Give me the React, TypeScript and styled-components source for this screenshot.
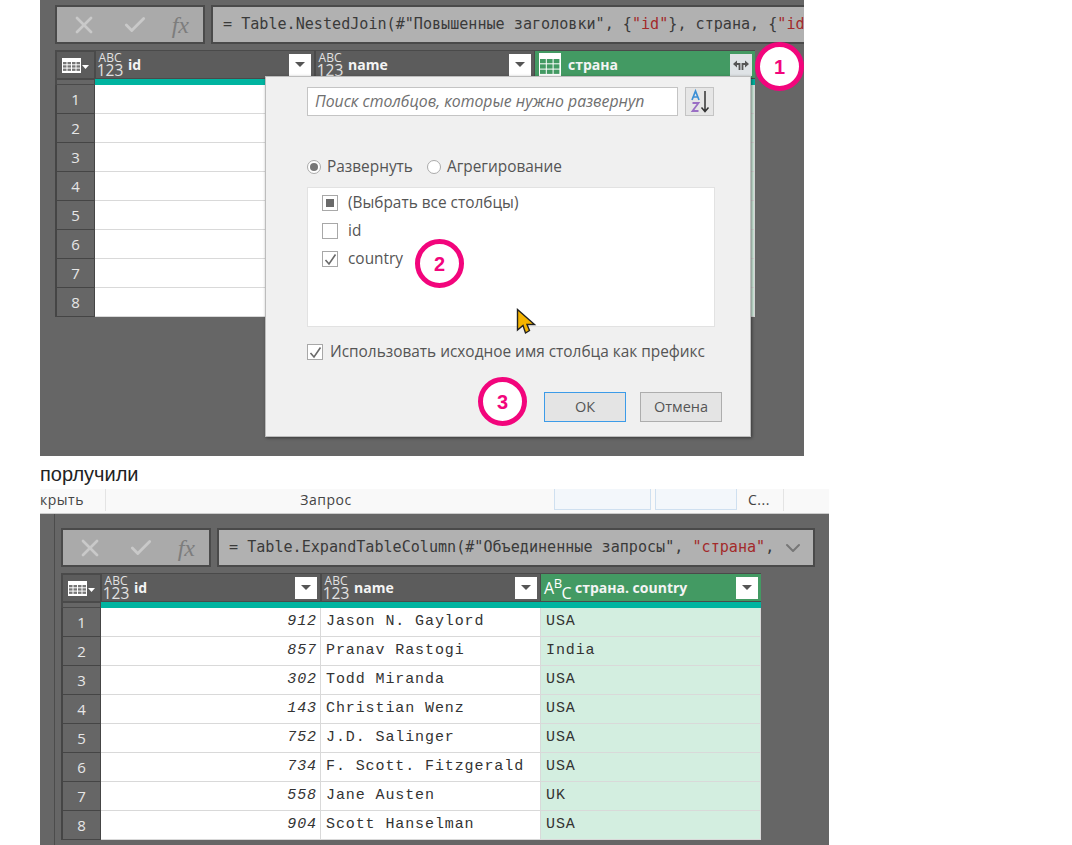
import React from 'react';
import styled, { createGlobalStyle } from 'styled-components';
import { X, Check, ChevronDown } from 'lucide-react';

const GlobalStyle = createGlobalStyle`
    html, body {
        margin: 0;
        padding: 0;
        background: #fff;
    }
    * {
        box-sizing: border-box;
    }
`;

const uiFont = `'Open Sans', 'Noto Sans', sans-serif`;

const Page = styled.div`
    width: 1072px;
    height: 845px;
    overflow: hidden;
    display: flex;
    flex-direction: column;
    align-items: flex-start;
`;

const TopShot = styled.section`
    position: relative;
    width: 764px;
    height: 456px;
    margin-left: 40px;
    padding: 5px 0 0 15px;
    background: #666;
    overflow: hidden;
`;

const Caption = styled.p`
    margin: 0 0 0 40px;
    height: 33px;
    padding-top: 5px;
    font: 20px/26px 'Liberation Sans', Arial, sans-serif;
    color: #222;
`;

const BottomShot = styled.section`
    width: 789px;
    height: 356px;
    margin-left: 40px;
    background: #666;
    overflow: hidden;
`;

const Ribbon = styled.div`
    height: 25px;
    display: flex;
    background: #f9f9f9;
    border-bottom: 1px solid #ccc;
    font: 14px/22px ${uiFont};
    color: #444;
`;

const RibbonCell = styled.div<{ $width: number; $center?: boolean; $sep?: boolean }>`
    width: ${(p) => p.$width}px;
    height: 22px;
    padding-right: ${(p) => (p.$center ? 8 : 0)}px;
    letter-spacing: 0.5px;
    text-align: ${(p) => (p.$center ? 'center' : 'left')};
    border-right: ${(p) => (p.$sep ? '1px solid #e4e4e4' : '0')};
    overflow: hidden;
`;

const RibbonSlot = styled.div<{ $width: number }>`
    width: ${(p) => p.$width}px;
    height: 21px;
    margin-right: 4px;
    background: #f3f7fb;
    border: 1px solid #cfe0f0;
    border-top: 0;
`;

const BottomBody = styled.div`
    margin-left: 14px;
    padding: 14px 0 0 6px;
    height: 331px;
    border-left: 1px solid #4c4c4c;
`;

const FormulaRow = styled.div`
    display: flex;
    gap: 6px;
    height: 39px;
`;

const ToolBox = styled.div`
    width: 150px;
    flex: none;
    display: flex;
    align-items: center;
    justify-content: space-between;
    padding: 0 14px 0 13px;
    background: #aaa;
    border: 2px solid #4a4a4a;
    color: #c9c9c9;
`;

const FxLabel = styled.span`
    font: italic 24px/1 'Liberation Serif', serif;
    color: #7d7d7d;
`;

const FormulaBox = styled.div<{ $width: number }>`
    width: ${(p) => p.$width}px;
    flex: none;
    display: flex;
    align-items: center;
    justify-content: space-between;
    padding: 0 8px 0 10px;
    background: #b1b1b1;
    border: 2px solid #4a4a4a;
    font: 15.1px/1 'DejaVu Sans Mono', monospace;
    color: #3a3a3a;
    white-space: pre;
    overflow: hidden;
`;

const Str = styled.span`
    color: #a32a2a;
`;

const Table = styled.div`
    margin-top: 6px;
    display: grid;
    width: 700px;
    grid-template-columns: 40px repeat(3, 220px);
    background: #555;
`;

const HeadCell = styled.div<{ $green?: boolean }>`
    height: 29px;
    display: flex;
    align-items: center;
    padding: 0 3px 0 2px;
    border: 1px solid #4a4a4a;
    border-left-width: ${(p) => (p.$green ? 0 : 1)}px;
    border-right-width: ${(p) => (p.$green ? 0 : 1)}px;
    background: ${(p) => (p.$green ? '#439a63' : '#5c5c5c')};
    color: #fff;
    font: 700 14px/1 ${uiFont};
`;

const CornerCell = styled(HeadCell)`
    justify-content: center;
    gap: 1px;
    padding: 0;
    border-width: 2px 1px 1px 2px;
`;

const HeadTitle = styled.span`
    flex: 1;
    margin-left: 6px;
    color: #f4f4f4;
`;

const TypeIcon = styled.span`
    width: 24px;
    display: flex;
    flex-direction: column;
    align-items: center;
    color: #e2e2e2;
    font: 400 12px/10px ${uiFont};
    & > b {
        font: 400 15.5px/14px ${uiFont};
    }
`;

const TextTypeIcon = styled.span`
    width: 26px;
    margin: 0 -1px 0 1px;
    color: #fff;
    font: 400 16px/1 ${uiFont};
    white-space: nowrap;
    letter-spacing: -0.5px;
    & > sup {
        font-size: 13px;
        position: relative;
        top: -6px;
        vertical-align: baseline;
    }
    & > sub {
        font-size: 16px;
        position: relative;
        top: 5px;
        vertical-align: baseline;
    }
`;

const FilterButton = styled.button<{ $expand?: boolean }>`
    width: 22px;
    height: 22px;
    padding: 0;
    display: flex;
    align-items: center;
    justify-content: center;
    background: ${(p) => (p.$expand ? '#dfe3e6' : '#fff')};
    border: 0;
`;

const TableIconBox = styled.span`
    width: 22px;
    height: 23px;
    margin: 0 1px 0 2px;
    display: flex;
    align-items: center;
    justify-content: center;
    background: #fff;
`;

const TealCell = styled.div<{ $dark?: boolean }>`
    height: 6px;
    background: ${(p) => (p.$dark ? '#666' : '#00b4a0')};
    border: ${(p) => (p.$dark ? '1px solid #4a4a4a' : '0')};
    border-width: ${(p) => (p.$dark ? '1px 1px 1px 2px' : '0 1px 0 0')};
    border-color: ${(p) => (p.$dark ? '#4a4a4a' : '#ddd')};
`;

const RowNumber = styled.div`
    height: 29px;
    display: flex;
    align-items: center;
    justify-content: center;
    background: #666;
    border: 1px solid #454545;
    border-left-width: 2px;
    border-top: 0;
    color: #e6e6e6;
    font: 15px/1 ${uiFont};
`;

const DataCell = styled.div<{ $right?: boolean; $tint?: boolean }>`
    height: 29px;
    padding: 0 3px 0 5px;
    text-align: ${(p) => (p.$right ? 'right' : 'left')};
    background: ${(p) => (p.$tint ? '#d3eee0' : '#fff')};
    border-right: 1px solid #d9d9d9;
    border-bottom: 1px solid #d9d9d9;
    font: ${(p) => (p.$right ? 'italic ' : '')}15px/27px 'Liberation Mono', 'Courier New', monospace;
    letter-spacing: 0.9px;
    color: #333;
    white-space: nowrap;
`;

const Dialog = styled.div`
    position: absolute;
    left: 225px;
    top: 76px;
    width: 486px;
    height: 361px;
    padding: 10px 28px 0 41px;
    background: #f0f0f0;
    border: 1px solid #bcbcbc;
    box-shadow: 1px 1px 3px rgba(0, 0, 0, 0.45);
    font: 15.4px/1 ${uiFont};
    color: #555;
`;

const SearchRow = styled.div`
    display: flex;
    gap: 7px;
`;

const SearchField = styled.div`
    width: 371px;
    height: 29px;
    padding: 0 7px;
    background: #fff;
    border: 1px solid #c4c4c4;
    font: italic 15.8px/27px ${uiFont};
    color: #6f6f6f;
    white-space: nowrap;
    overflow: hidden;
`;

const SortButton = styled.div`
    width: 29px;
    height: 29px;
    background: #e6e6e6;
    border: 1px solid #c4c4c4;
`;

const RadioRow = styled.div`
    margin-top: 40px;
    height: 22px;
    display: flex;
    align-items: center;
`;

const RadioItem = styled.label`
    display: flex;
    align-items: center;
    gap: 6px;
    margin-right: 14px;
`;

const RadioMark = styled.span<{ $on?: boolean }>`
    width: 14px;
    height: 14px;
    border-radius: 50%;
    border: 1px solid #aaa;
    background: #fff;
    position: relative;
    &::after {
        content: '';
        display: ${(p) => (p.$on ? 'block' : 'none')};
        position: absolute;
        inset: 2px;
        border-radius: 50%;
        background: #777;
    }
`;

const ColumnList = styled.div`
    margin-top: 9px;
    width: 408px;
    height: 140px;
    padding: 1px 14px 0;
    background: #fff;
    border: 1px solid #e2e2e2;
`;

const ListRow = styled.div`
    height: 28px;
    display: flex;
    align-items: center;
    gap: 10px;
`;

const CheckMark = styled.span<{ $mixed?: boolean }>`
    width: 16px;
    height: 16px;
    flex: none;
    display: flex;
    align-items: center;
    justify-content: center;
    background: #fff;
    border: 1px solid #a8a8a8;
    color: #666;
    &::after {
        content: '';
        display: ${(p) => (p.$mixed ? 'block' : 'none')};
        width: 8px;
        height: 8px;
        background: #6a6a6a;
    }
`;

const PrefixRow = styled.div`
    margin-top: 11px;
    height: 28px;
    display: flex;
    align-items: center;
    gap: 7px;
    white-space: nowrap;
`;

const ButtonRow = styled.div`
    margin-top: 26px;
    display: flex;
    justify-content: flex-end;
    gap: 14px;
`;

const DialogButton = styled.button<{ $primary?: boolean }>`
    width: 82px;
    height: 30px;
    padding: 0;
    background: #e4e4e4;
    border: ${(p) => (p.$primary ? '1px solid #3c9be8' : '1px solid #adadad')};
    font: 14.5px/1 ${uiFont};
    color: #555;
`;

const Callout = styled.span<{ $x: number; $y: number }>`
    position: absolute;
    left: ${(p) => p.$x}px;
    top: ${(p) => p.$y}px;
    width: 49px;
    height: 49px;
    display: flex;
    align-items: center;
    justify-content: center;
    background: #fff;
    border: 5px solid #f2057c;
    border-radius: 50%;
    color: #f2057c;
    font: 700 20px/1 'Liberation Sans', sans-serif;
`;

const CursorMark = styled.svg`
    position: absolute;
    left: 476px;
    top: 308px;
`;

function GridCells({ color, cols, rows, x, y, w, h }: {
    color: string;
    cols: number;
    rows: number;
    x: number;
    y: number;
    w: number;
    h: number;
}): React.ReactElement {
    const cells: React.ReactElement[] = [];
    for (let r = 0; r < rows; r += 1) {
        for (let c = 0; c < cols; c += 1) {
            cells.push(<rect key={`${r}-${c}`} x={x + c * (w + 1)} y={y + r * (h + 1)} width={w} height={h} fill={color} />);
        }
    }
    return <>{cells}</>;
}

function CornerIcon(): React.ReactElement {
    return (
        <svg width="19" height="15" viewBox="0 0 19 15">
            <rect width="19" height="15" fill="#fff" />
            <GridCells color="#777" cols={4} rows={3} x={1} y={4} w={3.5} h={2.3} />
        </svg>
    );
}

function GreenTableIcon(): React.ReactElement {
    return (
        <svg width="20" height="20" viewBox="0 0 20 20">
            <GridCells color="#439a63" cols={3} rows={3} x={0} y={4} w={5.8} h={4.3} />
        </svg>
    );
}

function CaretIcon(): React.ReactElement {
    return (
        <svg width="10" height="6" viewBox="0 0 10 6">
            <path d="M0 0H10L5 5Z" fill="#555" />
        </svg>
    );
}

function Type123(): React.ReactElement {
    return (
        <TypeIcon>
            ABC
            <b>123</b>
        </TypeIcon>
    );
}

function TickIcon({ size = 13 }: { size?: number }): React.ReactElement {
    return (
        <svg width={size} height={size} viewBox="0 0 13 13">
            <path d="M1.5 7L5 11L11.5 1.5" fill="none" stroke="#6a6a6a" strokeWidth="1.6" />
        </svg>
    );
}

function Tools(): React.ReactElement {
    return (
        <ToolBox>
            <X size={28} strokeWidth={2.4} />
            <Check size={26} strokeWidth={2.6} />
            <FxLabel>fx</FxLabel>
        </ToolBox>
    );
}

interface Person {
    id: number;
    name: string;
    country: string;
}

const people: Person[] = [
    { id: 912, name: 'Jason N. Gaylord', country: 'USA' },
    { id: 857, name: 'Pranav Rastogi', country: 'India' },
    { id: 302, name: 'Todd Miranda', country: 'USA' },
    { id: 143, name: 'Christian Wenz', country: 'USA' },
    { id: 752, name: 'J.D. Salinger', country: 'USA' },
    { id: 734, name: 'F. Scott. Fitzgerald', country: 'USA' },
    { id: 558, name: 'Jane Austen', country: 'UK' },
    { id: 904, name: 'Scott Hanselman', country: 'USA' },
];

function DataTable({ rows, children }: { rows: (Person | null)[]; children: React.ReactNode }): React.ReactElement {
    return (
        <Table>
            <CornerCell>
                <CornerIcon />
                <svg width="7" height="10" viewBox="0 0 7 10">
                    <path d="M0 5H7L3.5 9Z" fill="#fff" />
                </svg>
            </CornerCell>
            <HeadCell>
                <Type123 />
                <HeadTitle>id</HeadTitle>
                <FilterButton>
                    <CaretIcon />
                </FilterButton>
            </HeadCell>
            <HeadCell>
                <Type123 />
                <HeadTitle>name</HeadTitle>
                <FilterButton>
                    <CaretIcon />
                </FilterButton>
            </HeadCell>
            {children}
            <TealCell $dark />
            <TealCell />
            <TealCell />
            <TealCell />
            {rows.map((row, i) => (
                <React.Fragment key={i}>
                    <RowNumber>{i + 1}</RowNumber>
                    <DataCell $right>{row?.id}</DataCell>
                    <DataCell>{row?.name}</DataCell>
                    <DataCell $tint>{row?.country}</DataCell>
                </React.Fragment>
            ))}
        </Table>
    );
}

export default function App(): React.ReactElement {
    return (
        <Page>
            <GlobalStyle />
            <TopShot>
                <FormulaRow>
                    <Tools />
                    <FormulaBox $width={700}>
                        <span>
                            = Table.NestedJoin(#"Повышенные заголовки", {'{'}
                            <Str>"id"</Str>
                            {'}'}, страна, {'{'}
                            <Str>"id</Str>
                        </span>
                    </FormulaBox>
                </FormulaRow>
                <DataTable rows={Array(8).fill(null)}>
                    <HeadCell $green>
                        <TableIconBox>
                            <GreenTableIcon />
                        </TableIconBox>
                        <HeadTitle>страна</HeadTitle>
                        <FilterButton $expand>
                            <svg width="18" height="12" viewBox="0 0 18 12">
                                <path d="M7.5 11V5H4M10.5 11V5H14" fill="none" stroke="#555" strokeWidth="1.8" />
                                <path d="M5 1.5L1 5L5 8.5ZM13 1.5L17 5L13 8.5Z" fill="#555" />
                            </svg>
                        </FilterButton>
                    </HeadCell>
                </DataTable>
                <Dialog>
                    <SearchRow>
                        <SearchField>Поиск столбцов, которые нужно развернуп</SearchField>
                        <SortButton>
                            <svg width="27" height="27" viewBox="0 0 27 27">
                                <path d="M6 12L9.5 3L13 12M7.5 9H11.5" fill="none" stroke="#3b8fd6" strokeWidth="1.7" />
                                <path d="M6.5 15H12.5L6.5 23H12.5" fill="none" stroke="#9a6fc4" strokeWidth="1.8" />
                                <path d="M19 3V23M15.5 19.5L19 23.5L22.5 19.5" fill="none" stroke="#333" strokeWidth="1.5" />
                            </svg>
                        </SortButton>
                    </SearchRow>
                    <RadioRow>
                        <RadioItem>
                            <RadioMark $on />
                            Развернуть
                        </RadioItem>
                        <RadioItem>
                            <RadioMark />
                            Агрегирование
                        </RadioItem>
                    </RadioRow>
                    <ColumnList>
                        <ListRow>
                            <CheckMark $mixed />
                            (Выбрать все столбцы)
                        </ListRow>
                        <ListRow>
                            <CheckMark />
                            id
                        </ListRow>
                        <ListRow>
                            <CheckMark>
                                <TickIcon />
                            </CheckMark>
                            country
                        </ListRow>
                    </ColumnList>
                    <PrefixRow>
                        <CheckMark>
                            <TickIcon />
                        </CheckMark>
                        Использовать исходное имя столбца как префикс
                    </PrefixRow>
                    <ButtonRow>
                        <DialogButton $primary>ОК</DialogButton>
                        <DialogButton>Отмена</DialogButton>
                    </ButtonRow>
                </Dialog>
                <Callout $x={715} $y={42}>1</Callout>
                <Callout $x={375} $y={239}>2</Callout>
                <Callout $x={438} $y={377}>3</Callout>
                <CursorMark width="22" height="28" viewBox="0 0 22 28">
                    <path d="M1.5 1.5V22L7 17.5L9.5 25L13.5 22.5L11 16.5H18.5Z" fill="#f5b400" stroke="#222" strokeWidth="1.4" />
                </CursorMark>
            </TopShot>
            <Caption>порлучили</Caption>
            <BottomShot>
                <Ribbon>
                    <RibbonCell $width={66} $sep>крыть</RibbonCell>
                    <RibbonCell $width={448} $center>Запрос</RibbonCell>
                    <RibbonSlot $width={97} />
                    <RibbonSlot $width={82} />
                    <RibbonCell $width={7} />
                    <RibbonCell $width={36} $sep>С...</RibbonCell>
                </Ribbon>
                <BottomBody>
                    <FormulaRow>
                        <Tools />
                        <FormulaBox $width={598}>
                            <span>
                                = Table.ExpandTableColumn(#"Объединенные запросы", <Str>"страна"</Str>,
                            </span>
                            <ChevronDown size={24} color="#777" />
                        </FormulaBox>
                    </FormulaRow>
                    <DataTable rows={people}>
                        <HeadCell $green>
                            <TextTypeIcon>
                                A<sup>B</sup>
                                <sub>C</sub>
                            </TextTypeIcon>
                            <HeadTitle>страна. country</HeadTitle>
                            <FilterButton>
                                <CaretIcon />
                            </FilterButton>
                        </HeadCell>
                    </DataTable>
                </BottomBody>
            </BottomShot>
        </Page>
    );
}
